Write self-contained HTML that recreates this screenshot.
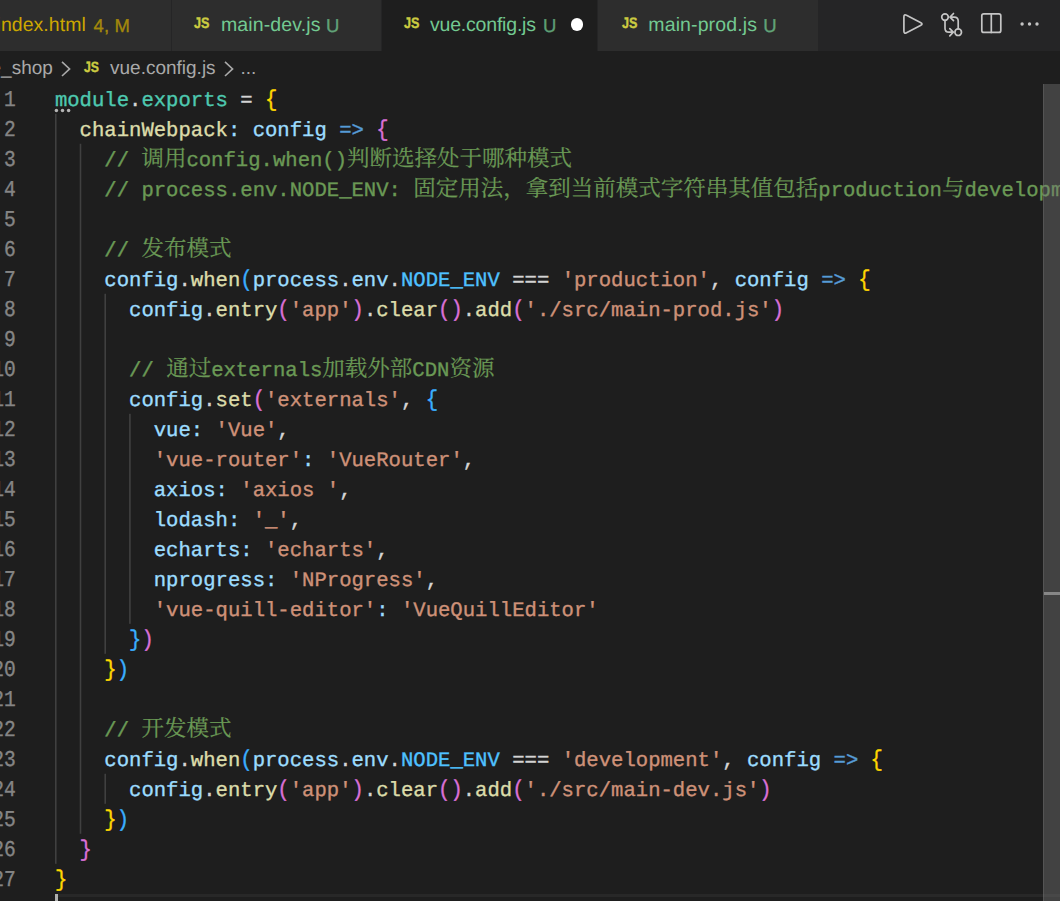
<!DOCTYPE html>
<html><head><meta charset="utf-8"><title>vue.config.js</title>
<style>
*{margin:0;padding:0;box-sizing:border-box}
html,body{width:1060px;height:901px;overflow:hidden;background:#1e1e1e}
body{position:relative;font-family:"Liberation Sans",sans-serif;text-rendering:geometricPrecision}
#tabbar{position:absolute;left:0;top:0;width:1060px;height:51px;background:#252526}
.tab{position:absolute;top:0;height:51px;background:#2d2d2d;border-right:1px solid #252526}
.tab.act{background:#1e1e1e}
.tl{position:absolute;top:0;height:51px;line-height:51px;font-size:19.5px;letter-spacing:.12px;white-space:pre}
.js{position:absolute;top:14px;font-weight:bold;color:#cbcb41;font-size:15.2px;line-height:20px;white-space:pre;transform:scaleX(.83);transform-origin:0 0;-webkit-text-stroke:.4px}
#crumbs{position:absolute;left:0;top:51px;width:1060px;height:32px;color:#a9a9a9;font-size:19px}
#crumbs span{position:absolute;top:1.5px;line-height:32px;white-space:pre}
#ed{position:absolute;left:0;top:0;width:1060px;height:901px;overflow:hidden;font-family:"Liberation Mono",monospace;font-size:20.60497965825875px;-webkit-text-stroke:.35px}
.ln{position:absolute;left:54.9px;height:30px;line-height:30px;white-space:pre;margin-top:3.6px}
.b1,.b2,.b3{display:inline-block;transform:translateY(.5px) scaleY(1.11);transform-origin:50% 24.4px}
.num{position:absolute;left:-49.2px;width:64.8px;text-align:right;height:30px;line-height:30px;color:#858585;margin-top:3.6px;transform:scale(.95,1.1);transform-origin:64.8px 20.5px}
#gd{position:absolute;left:0;top:0;fill:#404040}
.cj{display:inline-block;vertical-align:baseline;font-family:"Liberation Mono","Noto Serif CJK SC",monospace;font-size:22.5px;line-height:0;white-space:nowrap;-webkit-text-stroke:.2px}
.w{color:#cca700}.u{color:#73c991}.dim{opacity:.75;-webkit-text-stroke:.3px}
.dot{position:absolute;left:570.5px;top:18.2px;width:12.6px;height:12.6px;border-radius:50%;background:#fff}
.ico{position:absolute}
.chev{position:absolute}
.hint{position:absolute;top:109px;width:3.2px;height:3.2px;background:#a6a6a6}
#curline{position:absolute;left:55px;top:894px;width:1005px;height:3px;background:#282828}
#cursor{position:absolute;left:55px;top:894px;width:3px;height:10px;background:#aeafad}
#sb{position:absolute;left:1043px;top:84px;width:17px;height:820px;background:rgba(121,121,121,.4);border-left:1px solid rgba(127,127,127,.3)}
#sbm{position:absolute;left:1044px;top:592px;width:16px;height:3px;background:#878787}
.teal{color:#4EC9B0}.t{color:#D4D4D4}.v{color:#9CDCFE}.f{color:#DCDCAA}.k{color:#569CD6}.s{color:#CE9178}.c{color:#4FC1FF}.m{color:#6A9955}.b1{color:#FFD700}.b2{color:#DA70D6}.b3{color:#3AAEFF}</style></head><body>
<div id="tabbar">

<div class="tab" style="left:0;width:172px"></div>
<div class="tab" style="left:172px;width:210px"></div>
<div class="tab act" style="left:382px;width:216px"></div>
<div class="tab" style="left:598px;width:221px"></div>
<span class="tl w" style="left:-3.5px;letter-spacing:.05px">index.html</span><span class="tl w dim" style="left:93.5px;font-size:18.5px">4, M</span>
<span class="js" style="left:194px">JS</span><span class="tl u" style="left:221px">main-dev.js</span><span class="tl u dim" style="left:326px;font-size:18.5px">U</span>
<span class="js" style="left:404px">JS</span><span class="tl u" style="left:430px;letter-spacing:-.2px">vue.config.js</span><span class="tl u dim" style="left:543px;font-size:18.5px">U</span>
<i class="dot"></i>
<span class="js" style="left:622px">JS</span><span class="tl u" style="left:648.3px">main-prod.js</span><span class="tl u dim" style="left:763.3px;font-size:18.5px">U</span>
<svg class="ico" width="160" height="51" viewBox="895 0 160 51" style="left:895px;top:0">
<g fill="none" stroke="#c5c5c5" stroke-width="1.7" stroke-linejoin="round" stroke-linecap="round">
<path d="M903.90 16.93 L903.90 31.07 Q903.90 34.00 906.51 32.67 L920.44 25.61 Q923.60 24.00 920.44 22.39 L906.51 15.33 Q903.90 14.00 903.90 16.93 Z"/>
<circle cx="945" cy="17.1" r="3.3"/><circle cx="958.2" cy="32.2" r="3.3"/>
<path d="M945 20.5 V28.2 Q945 32.2 949 32.2 H953 M949.8 28.6 L953.3 32.2 L949.8 35.8"/>
<path d="M958.2 28.8 V21.1 Q958.2 17.1 954.2 17.1 H950.2 M953.5 13.5 L950 17.1 L953.5 20.7"/>
<rect x="981.8" y="13.8" width="19" height="18.6" rx="2"/><path d="M991.3 13.8 V32.4"/>
</g>
<g fill="#c5c5c5"><circle cx="1022.1" cy="24" r="1.7"/><circle cx="1029.5" cy="24" r="1.7"/><circle cx="1037" cy="24" r="1.7"/></g>
</svg>

</div>
<div id="crumbs">

<span style="left:-9.5px">e_shop</span>
<svg class="chev" style="left:60px;top:9px" width="12" height="18" viewBox="0 0 12 18"><path d="M2 1.8 L9.6 8.9 L2 16" fill="none" stroke="#a9a9a9" stroke-width="1.6"/></svg>
<span class="js" style="left:84px;top:1.2px;font-size:14.8px">JS</span>
<span style="left:110px">vue.config.js</span>
<svg class="chev" style="left:223px;top:9px" width="12" height="18" viewBox="0 0 12 18"><path d="M2 1.8 L9.6 8.9 L2 16" fill="none" stroke="#a9a9a9" stroke-width="1.6"/></svg>
<span style="left:240.5px">...</span>

</div>
<div id="ed">
<svg id="gd" width="200" height="901" viewBox="0 0 200 901"><rect x="55.0" y="113.8" width="1.6" height="750"/><rect x="79.7" y="143.8" width="1.6" height="690"/><rect x="104.4" y="293.8" width="1.6" height="360"/><rect x="129.1" y="413.8" width="1.6" height="210"/><rect x="104.4" y="773.8" width="1.6" height="30"/></svg>
<div class="num" style="top:83px">1</div><div class="ln" style="top:83px"><span class="teal">module</span><span class="t">.</span><span class="teal">exports</span><span class="t"> = </span><span class="b1">{</span></div>
<div class="num" style="top:113px">2</div><div class="ln" style="top:113px"><span class="t">  </span><span class="f">chainWebpack</span><span class="v">:</span><span class="t"> </span><span class="v">config</span><span class="t"> </span><span class="k">=&gt;</span><span class="t"> </span><span class="b2">{</span></div>
<div class="num" style="top:143px">3</div><div class="ln" style="top:143px"><span class="t">    </span><span class="m">// <span class="cj" style="width:45.00px">调用</span>config.when()<span class="cj" style="width:225.00px">判断选择处于哪种模式</span></span></div>
<div class="num" style="top:173px">4</div><div class="ln" style="top:173px"><span class="t">    </span><span class="m">// process.env.NODE_ENV: <span class="cj" style="width:405.00px">固定用法，拿到当前模式字符串其值包括</span>production<span class="cj" style="width:22.50px">与</span>development</span></div>
<div class="num" style="top:203px">5</div><div class="ln" style="top:203px"></div>
<div class="num" style="top:233px">6</div><div class="ln" style="top:233px"><span class="t">    </span><span class="m">// <span class="cj" style="width:90.00px">发布模式</span></span></div>
<div class="num" style="top:263px">7</div><div class="ln" style="top:263px"><span class="t">    </span><span class="v">config</span><span class="t">.</span><span class="f">when</span><span class="b3">(</span><span class="v">process</span><span class="t">.</span><span class="v">env</span><span class="t">.</span><span class="c">NODE_ENV</span><span class="t"> === </span><span class="s">'production'</span><span class="t">, </span><span class="v">config</span><span class="t"> </span><span class="k">=&gt;</span><span class="t"> </span><span class="b1">{</span></div>
<div class="num" style="top:293px">8</div><div class="ln" style="top:293px"><span class="t">      </span><span class="v">config</span><span class="t">.</span><span class="f">entry</span><span class="b2">(</span><span class="s">'app'</span><span class="b2">)</span><span class="t">.</span><span class="f">clear</span><span class="b2">()</span><span class="t">.</span><span class="f">add</span><span class="b2">(</span><span class="s">'./src/main-prod.js'</span><span class="b2">)</span></div>
<div class="num" style="top:323px">9</div><div class="ln" style="top:323px"></div>
<div class="num" style="top:353px">10</div><div class="ln" style="top:353px"><span class="t">      </span><span class="m">// <span class="cj" style="width:45.00px">通过</span>externals<span class="cj" style="width:90.00px">加载外部</span>CDN<span class="cj" style="width:45.00px">资源</span></span></div>
<div class="num" style="top:383px">11</div><div class="ln" style="top:383px"><span class="t">      </span><span class="v">config</span><span class="t">.</span><span class="f">set</span><span class="b2">(</span><span class="s">'externals'</span><span class="t">, </span><span class="b3">{</span></div>
<div class="num" style="top:413px">12</div><div class="ln" style="top:413px"><span class="t">        </span><span class="v">vue</span><span class="v">:</span><span class="t"> </span><span class="s">'Vue'</span><span class="t">,</span></div>
<div class="num" style="top:443px">13</div><div class="ln" style="top:443px"><span class="t">        </span><span class="s">'vue-router'</span><span class="v">:</span><span class="t"> </span><span class="s">'VueRouter'</span><span class="t">,</span></div>
<div class="num" style="top:473px">14</div><div class="ln" style="top:473px"><span class="t">        </span><span class="v">axios</span><span class="v">:</span><span class="t"> </span><span class="s">'axios '</span><span class="t">,</span></div>
<div class="num" style="top:503px">15</div><div class="ln" style="top:503px"><span class="t">        </span><span class="v">lodash</span><span class="v">:</span><span class="t"> </span><span class="s">'_'</span><span class="t">,</span></div>
<div class="num" style="top:533px">16</div><div class="ln" style="top:533px"><span class="t">        </span><span class="v">echarts</span><span class="v">:</span><span class="t"> </span><span class="s">'echarts'</span><span class="t">,</span></div>
<div class="num" style="top:563px">17</div><div class="ln" style="top:563px"><span class="t">        </span><span class="v">nprogress</span><span class="v">:</span><span class="t"> </span><span class="s">'NProgress'</span><span class="t">,</span></div>
<div class="num" style="top:593px">18</div><div class="ln" style="top:593px"><span class="t">        </span><span class="s">'vue-quill-editor'</span><span class="v">:</span><span class="t"> </span><span class="s">'VueQuillEditor'</span></div>
<div class="num" style="top:623px">19</div><div class="ln" style="top:623px"><span class="t">      </span><span class="b3">}</span><span class="b2">)</span></div>
<div class="num" style="top:653px">20</div><div class="ln" style="top:653px"><span class="t">    </span><span class="b1">}</span><span class="b3">)</span></div>
<div class="num" style="top:683px">21</div><div class="ln" style="top:683px"></div>
<div class="num" style="top:713px">22</div><div class="ln" style="top:713px"><span class="t">    </span><span class="m">// <span class="cj" style="width:90.00px">开发模式</span></span></div>
<div class="num" style="top:743px">23</div><div class="ln" style="top:743px"><span class="t">    </span><span class="v">config</span><span class="t">.</span><span class="f">when</span><span class="b3">(</span><span class="v">process</span><span class="t">.</span><span class="v">env</span><span class="t">.</span><span class="c">NODE_ENV</span><span class="t"> === </span><span class="s">'development'</span><span class="t">, </span><span class="v">config</span><span class="t"> </span><span class="k">=&gt;</span><span class="t"> </span><span class="b1">{</span></div>
<div class="num" style="top:773px">24</div><div class="ln" style="top:773px"><span class="t">      </span><span class="v">config</span><span class="t">.</span><span class="f">entry</span><span class="b2">(</span><span class="s">'app'</span><span class="b2">)</span><span class="t">.</span><span class="f">clear</span><span class="b2">()</span><span class="t">.</span><span class="f">add</span><span class="b2">(</span><span class="s">'./src/main-dev.js'</span><span class="b2">)</span></div>
<div class="num" style="top:803px">25</div><div class="ln" style="top:803px"><span class="t">    </span><span class="b1">}</span><span class="b3">)</span></div>
<div class="num" style="top:833px">26</div><div class="ln" style="top:833px"><span class="t">  </span><span class="b2">}</span></div>
<div class="num" style="top:863px">27</div><div class="ln" style="top:863px"><span class="b1">}</span></div>

<svg id="hint" width="30" height="10" viewBox="0 0 30 10" style="position:absolute;left:50px;top:105px"><g fill="#b4b4b4"><circle cx="6.4" cy="5.5" r="1.75"/><circle cx="12.5" cy="5.5" r="1.75"/><circle cx="18.6" cy="5.5" r="1.75"/></g></svg>
<div id="curline"></div><div id="cursor"></div>
<div id="sb"></div><div id="sbm"></div>

</div>
</body></html>
